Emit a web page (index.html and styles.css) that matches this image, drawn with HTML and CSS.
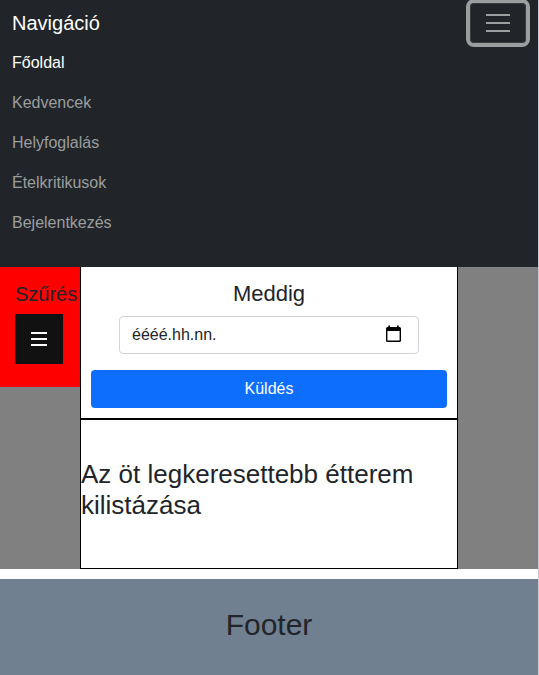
FILE: index.html
```html
<!DOCTYPE html>
<html lang="hu">
<head>
<meta charset="utf-8">
<title>Főoldal</title>
<link rel="stylesheet" href="styles.css">
</head>
<body>
<nav class="navbar">
  <div class="navbar-head">
    <a class="brand">Navigáció</a>
    <button class="toggler" type="button" aria-label="Menü">
      <svg width="30" height="30" viewBox="0 0 30 30"><path d="M3 7h24M3 15h24M3 23h24" stroke="currentColor" stroke-width="2"/></svg>
    </button>
  </div>
  <ul class="links">
    <li class="active">Főoldal</li>
    <li>Kedvencek</li>
    <li>Helyfoglalás</li>
    <li>Ételkritikusok</li>
    <li>Bejelentkezés</li>
  </ul>
</nav>
<main class="content">
  <aside class="filter">
    <h5>Szűrés</h5>
    <button class="filter-button" type="button" aria-label="Szűrés megnyitása">
      <svg width="16" height="16" viewBox="0 0 16 16"><path d="M0 2h16M0 8h16M0 14h16" stroke="currentColor" stroke-width="2"/></svg>
    </button>
  </aside>
  <div class="middle">
    <form class="booking">
      <h4>Meddig</h4>
      <div class="date-field">
        <span>éééé.hh.nn.</span>
        <svg width="15" height="18" viewBox="0 0 15 18"><path d="M2.300 .4h1.700V2h7V.4h1.700V2h.8Q15 2 15 3.500v12Q15 17 13.500 17h-12Q0 17 0 15.500v-12Q0 2 1.500 2h.8zM1.400 6v9.600h12.200V6z" fill-rule="evenodd"/></svg>
      </div>
      <button class="submit" type="button">Küldés</button>
    </form>
    <section class="top-list">
      <h3>Az öt legkeresettebb étterem kilistázása</h3>
    </section>
  </div>
</main>
<footer class="footer"><h2>Footer</h2></footer>
</body>
</html>
```
FILE: styles.css
```css
* { box-sizing: border-box; }
html { background: #fff; overflow: hidden; }
body {
  margin: 0;
  height: 675px;
  border-right: 1px solid #c9c9d1;
  display: flex;
  flex-direction: column;
  font: 16px/24px "Liberation Sans", Arial, sans-serif;
  color: #212529;
}
h2, h3, h4, h5 { margin: 0; font-weight: 400; line-height: 1.2; }
button { font: inherit; padding: 0; }
svg { display: block; }
.navbar { flex: none; height: 267px; background: #212529; padding: 3px 12px 0; }
.navbar-head { display: flex; justify-content: space-between; height: 40px; }
.brand { color: #fff; font-size: 20px; line-height: 40px; }
.toggler {
  width: 56px;
  height: 40px;
  display: flex;
  align-items: center;
  justify-content: center;
  color: #9b9d9e;
  background: transparent;
  border: 1px solid #393c3f;
  border-radius: 4px;
  box-shadow: 0 0 0 4px #9b9d9e;
}
.links { list-style: none; margin: 0; padding: 0; }
.links li { padding: 8px 0; color: #9b9d9e; }
.links .active { color: #fff; }
.content {
  flex: none;
  height: 302px;
  display: grid;
  grid-template-columns: 80px 378px 80px;
  align-items: start;
  background: gray;
}
.filter { height: 120px; padding: 15px 0 0 15px; background: red; }
.filter h5 { font-size: 20px; }
.filter-button {
  width: 48px;
  height: 50px;
  margin-top: 8px;
  display: flex;
  align-items: center;
  justify-content: center;
  color: #fff;
  background: #111;
  border: 0;
}
.middle { background: #fff; }
.booking {
  height: 152px;
  padding: 13px 10px 10px;
  border: 1px solid #000;
  border-top: 0;
  display: flex;
  flex-direction: column;
  align-items: center;
}
.booking h4 { font-size: 22px; line-height: 28px; }
.date-field {
  width: 300px;
  height: 38px;
  margin-top: 8px;
  padding: 0 17px 0 12px;
  display: flex;
  align-items: center;
  justify-content: space-between;
  border: 1px solid #ced4da;
  border-radius: 4px;
}
.date-field svg { margin-bottom: 2px; }
.submit {
  width: 100%;
  height: 38px;
  margin-top: 16px;
  color: #fff;
  background: #0d6efd;
  border: 0;
  border-radius: 4px;
}
.top-list { height: 150px; padding-top: 39px; border: 1px solid #000; }
.top-list h3 { font-size: 26px; }
.footer {
  flex: none;
  height: 96px;
  margin-top: 10px;
  padding-top: 28px;
  text-align: center;
  background: #708090;
}
.footer h2 { font-size: 30px; }
```
